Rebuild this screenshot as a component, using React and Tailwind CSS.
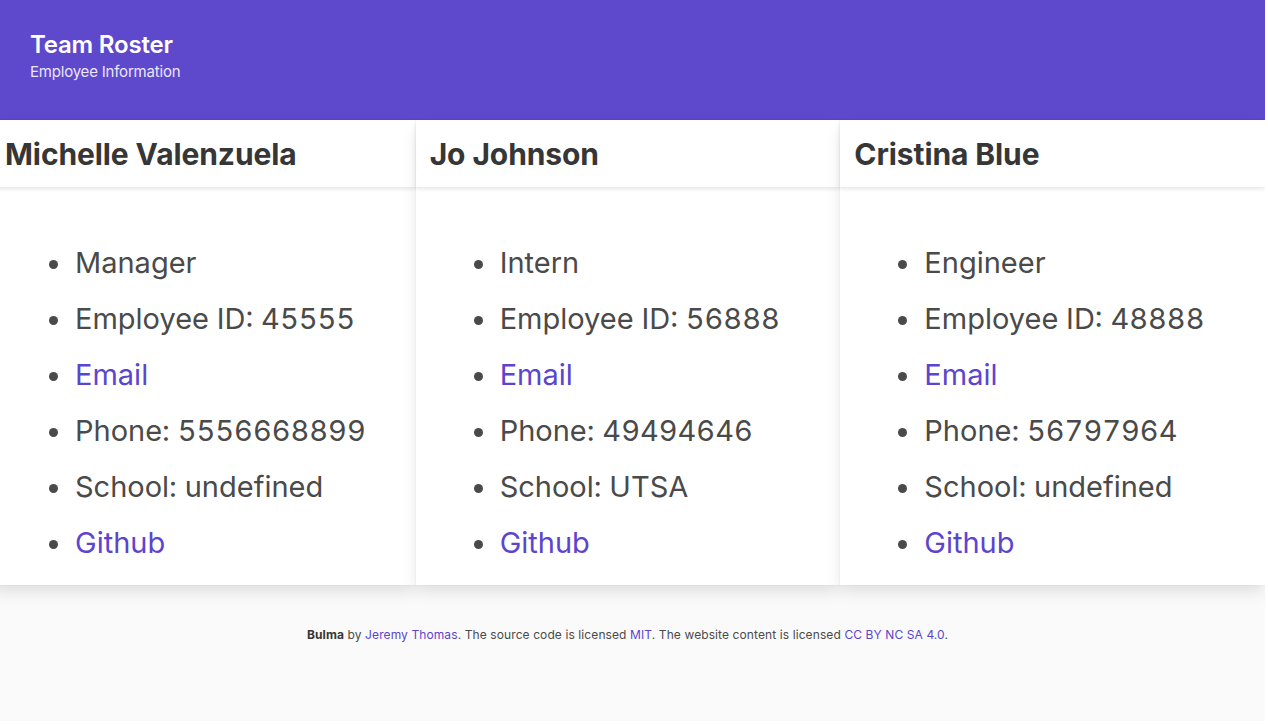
import React from 'react';

const team = [
  {
    name: 'Michelle Valenzuela',
    role: 'Manager',
    id: 45555,
    extra: 'Phone: 5556668899',
    school: 'School: undefined',
  },
  {
    name: 'Jo Johnson',
    role: 'Intern',
    id: 56888,
    extra: 'Phone: 49494646',
    school: 'School: UTSA',
  },
  {
    name: 'Cristina Blue',
    role: 'Engineer',
    id: 48888,
    extra: 'Phone: 56797964',
    school: 'School: undefined',
  },
];

const Card = ({ person }) => (
  <div className="bg-white shadow-[0_8px_16px_-2px_rgba(10,10,10,0.12),0_0_0_1px_rgba(10,10,10,0.02)]">
    <div className="h-[67px] flex items-center pl-[14px] pt-[2px] shadow-[0_2px_4px_rgba(10,10,10,0.1)]">
      <h2 className="text-[30px] font-bold text-[#363636] tracking-[-0.1px]">
        {person.name}
      </h2>
    </div>
    <ul className="pt-[48px] pb-[14px] pl-[83px] list-disc text-[29px] leading-[56px] text-[#4a4a4a] tabular-nums">
      <li className="pl-[1px]">{person.role}</li>
      <li className="pl-[1px]">Employee ID: {person.id}</li>
      <li className="pl-[1px]">
        <a href="#" className="text-[#5b45cf]">
          Email
        </a>
      </li>
      <li className="pl-[1px]">{person.extra}</li>
      <li className="pl-[1px]">{person.school}</li>
      <li className="pl-[1px]">
        <a href="#" className="text-[#5b45cf]">
          Github
        </a>
      </li>
    </ul>
  </div>
);

export default function App() {
  return (
    <div className="w-[1265px] overflow-hidden font-['Inter',sans-serif] bg-white min-h-[726px]">
      <header className="bg-[#5e48cc] h-[120px] pl-[30px] pt-[30px]">
        <h1 className="text-[24px] leading-[30px] font-semibold text-white tracking-[-0.2px]">
          Team Roster
        </h1>
        <p className="text-[15px] leading-[22px] text-[#ebe7fa] mt-[1px] tracking-[-0.2px]">
          Employee Information
        </p>
      </header>

      <main className="relative z-10 ml-[-9px] w-[1274px] grid grid-cols-3">
        {team.map((p) => (
          <Card key={p.name} person={p} />
        ))}
      </main>

      <footer className="bg-[#fafafa] h-[136px] pt-[41px] text-center text-[12px] leading-[18px] text-[#4a4a4a] pr-[10px] tracking-[0.1px]">
        <strong className="text-[#363636]">Bulma</strong> by{' '}
        <a href="#" className="text-[#5b45cf]">
          Jeremy Thomas
        </a>
        . The source code is licensed{' '}
        <a href="#" className="text-[#5b45cf]">
          MIT
        </a>
        . The website content is licensed{' '}
        <a href="#" className="text-[#5b45cf]">
          CC BY NC SA 4.0
        </a>
        .
      </footer>
    </div>
  );
}
